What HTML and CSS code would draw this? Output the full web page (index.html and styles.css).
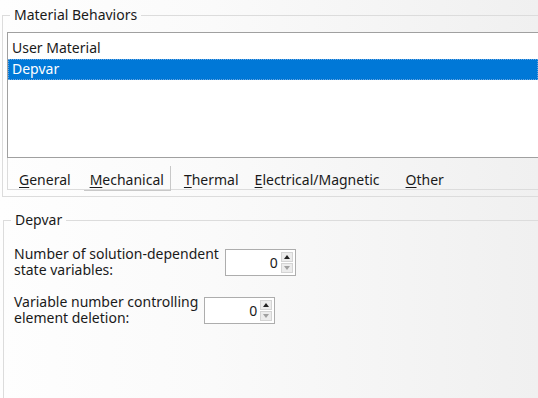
FILE: index.html
```html
<!DOCTYPE html>
<html>
<head>
<meta charset="utf-8">
<link rel="stylesheet" href="styles.css">
</head>
<body>
<div class="page">
  <fieldset class="group behaviors">
    <legend>Material Behaviors</legend>
    <div class="list">
      <div class="row">User Material</div>
      <div class="row selected">Depvar</div>
    </div>
    <div class="tabs">
      <span class="tab"><u>G</u>eneral</span>
      <span class="tab pressed"><u>M</u>echanical</span>
      <span class="tab"><u>T</u>hermal</span>
      <span class="tab"><u>E</u>lectrical/Magnetic</span>
      <span class="tab other"><u>O</u>ther</span>
    </div>
  </fieldset>
  <fieldset class="group depvar">
    <legend>Depvar</legend>
    <div class="field f1">
      <label>Number of solution-dependent<br>state variables:</label>
      <div class="spin"><span class="val">0</span><span class="arrows"><span class="up"></span><span class="down"></span></span></div>
    </div>
    <div class="field f2">
      <label>Variable number controlling<br>element deletion:</label>
      <div class="spin"><span class="val">0</span><span class="arrows"><span class="up"></span><span class="down"></span></span></div>
    </div>
  </fieldset>
</div>
</body>
</html>
```
FILE: styles.css
```css
html, body {
  margin: 0;
  padding: 0;
}
body {
  width: 538px;
  height: 398px;
  overflow: hidden;
  background: linear-gradient(to right, #fefefe 0%, #fafafa 40%, #f0f0f0 100%);
  font-family: "Segoe UI", "Noto Sans", "DejaVu Sans", sans-serif;
  font-size: 14px;
  color: #1a1a1a;
}
.page {
  display: flex;
  flex-direction: column;
  padding-top: 7px;
}
.group {
  margin: 0;
  border: 1px solid #dcdcdc;
  border-right: none;
  padding: 0;
  min-width: 0;
}
.group legend {
  padding: 0 4px;
  line-height: 16px;
  color: #1a1a1a;
}
.behaviors {
  margin-left: 2px;
  padding: 9px 0 6px 4px;
}
.behaviors legend {
  margin-left: 3px;
}
.list {
  background: #fff;
  border: 1px solid #a0a0a0;
  border-right: none;
  height: 126px;
  box-sizing: border-box;
  padding-top: 5px;
}
.row {
  height: 21px;
  line-height: 20px;
  padding-left: 4px;
  box-sizing: border-box;
}
.selected {
  background: #0078d7;
  color: #fff;
  outline: 1px dotted #6aa6e0;
  outline-offset: -1px;
}
.tabs {
  display: flex;
  align-items: flex-end;
  height: 32px;
  box-sizing: border-box;
  border-left: 1px solid #dcdcdc;
  border-bottom: 1px solid #dcdcdc;
  padding-left: 4px;
}
.tab {
  padding: 6px 9px 1px 7px;
  line-height: 16px;
}
.tab u {
  text-decoration-thickness: 1px;
  text-underline-offset: 2px;
}
.pressed {
  padding: 6px 6px 2px 6px;
  margin-left: 4px;
  margin-right: 6px;
  border-right: 1px solid #c8c8c8;
  border-bottom: 1px solid #c8c8c8;
  margin-bottom: -2px;
}
.other {
  padding-left: 17px;
}
.depvar {
  margin: 15px 0 0 3px;
  padding: 18px 0 80px 10px;
  border-bottom: none;
}
.depvar legend {
  margin-left: -3px;
}
.field {
  display: flex;
  align-items: flex-start;
  gap: 6px;
}
.f2 {
  margin-top: 16px;
}
.field label {
  line-height: 16px;
}
.spin {
  margin-top: 3px;
  width: 71px;
  height: 27px;
  box-sizing: border-box;
  background: #fff;
  border: 1px solid #adadad;
  display: flex;
  align-items: center;
  justify-content: flex-end;
  padding-right: 2px;
}
.val {
  margin-right: 3px;
}
.arrows {
  display: flex;
  flex-direction: column;
  gap: 1px;
}
.up, .down {
  width: 12px;
  height: 10px;
  box-sizing: border-box;
  background: #ececec;
  border: 1px solid #d4d4d4;
  position: relative;
  display: block;
}
.up::after, .down::after {
  content: "";
  position: absolute;
  left: 2px;
  width: 0;
  height: 0;
  border-left: 3px solid transparent;
  border-right: 3px solid transparent;
}
.up::after {
  top: 2px;
  border-bottom: 4px solid #222;
}
.down::after {
  top: 2px;
  border-top: 4px solid #a0a0a0;
}
```
